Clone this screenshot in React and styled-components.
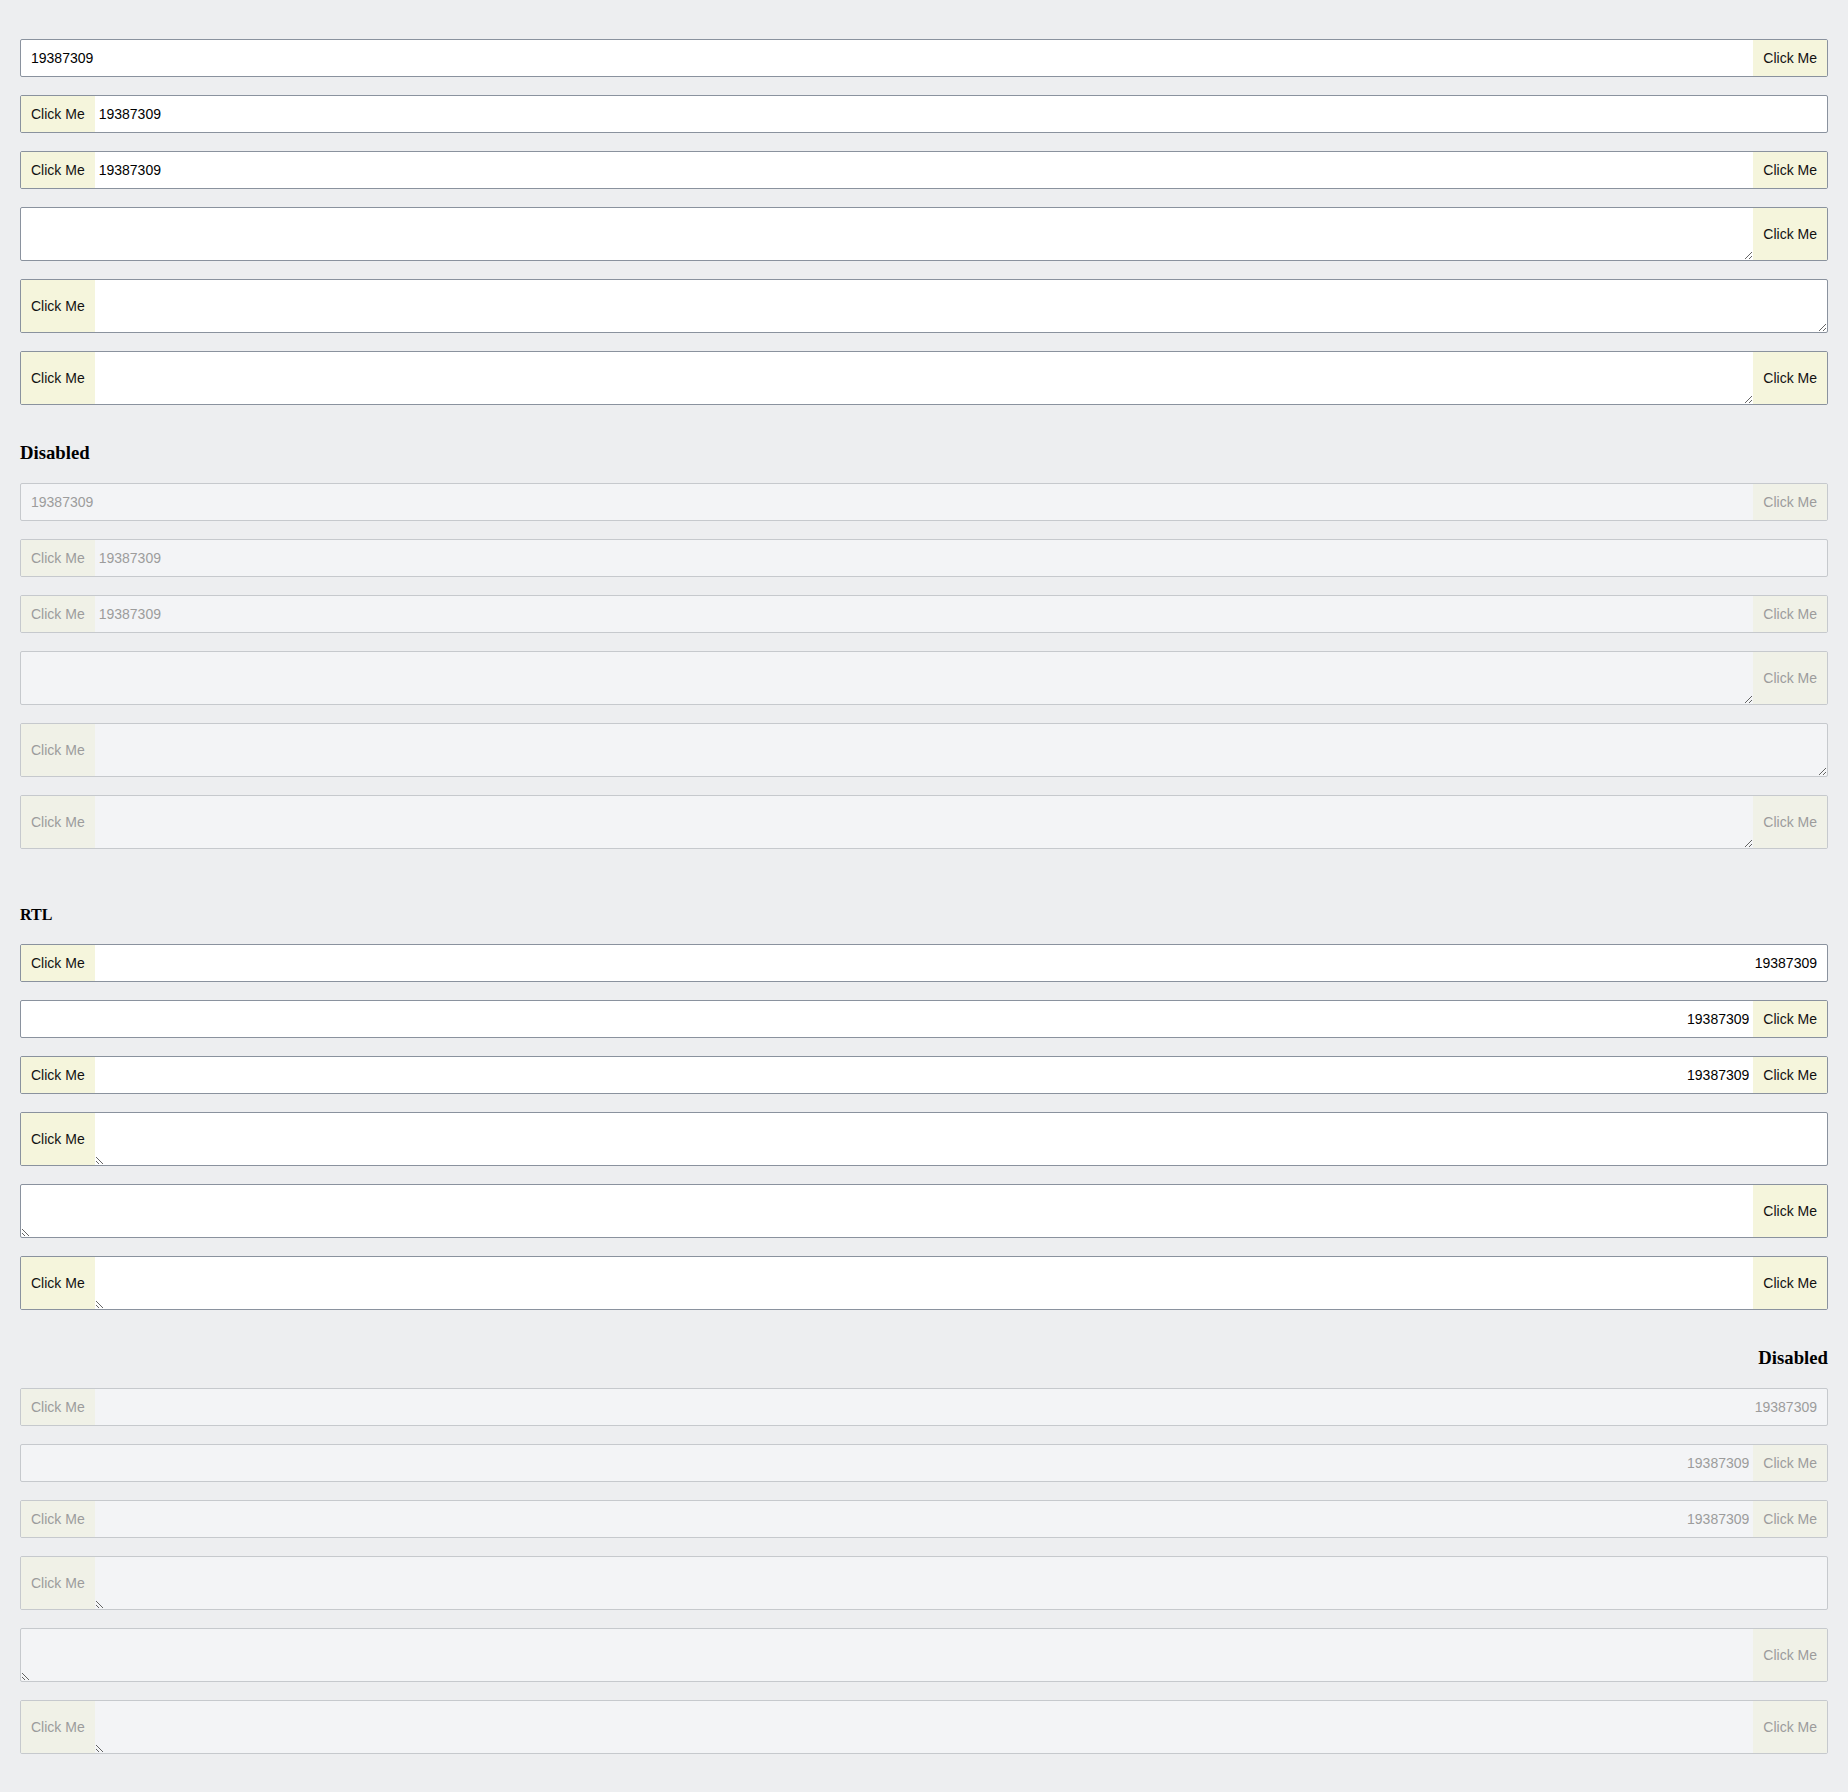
import styled, { createGlobalStyle } from 'styled-components';

const GlobalStyle = createGlobalStyle`
  html, body {
    margin: 0;
    padding: 0;
    background: #edeef0;
  }
  body {
    font-family: "Liberation Serif", "Times New Roman", serif;
  }
`;

const Page = styled.div`
  display: flex;
  flex-direction: column;
  padding: 39px 20px 19px;
`;

const Section = styled.div`
  display: flex;
  flex-direction: column;
  direction: ${props => (props.rtl ? 'rtl' : 'ltr')};
`;

const Title = styled.h3`
  font-family: "Liberation Serif", "Times New Roman", serif;
  font-size: 18.72px;
  font-weight: bold;
  color: #000;
  margin: 19px 0 19px;
`;

const SubTitle = styled.h4`
  font-family: "Liberation Serif", "Times New Roman", serif;
  font-size: 16px;
  font-weight: bold;
  color: #000;
  margin: 39px 0 20px;
`;

const Field = styled.div`
  display: flex;
  align-items: stretch;
  height: ${props => (props.multiline ? '54px' : '38px')};
  box-sizing: border-box;
  margin-bottom: 18px;
  border: 1px solid ${props => (props.disabled ? '#c6c9cd' : '#8a929e')};
  border-radius: 2px;
  overflow: hidden;
  background: ${props => (props.disabled ? '#f3f4f6' : '#fff')};
`;

const AddOn = styled.button`
  flex: none;
  display: flex;
  align-items: center;
  margin: 0;
  padding: 0 10px;
  border: none;
  border-radius: 0;
  background: ${props => (props.disabled ? '#f0f1e7' : '#f5f5dc')};
  color: ${props => (props.disabled ? '#9c9c9c' : '#111')};
  font-family: "Liberation Sans", Arial, sans-serif;
  font-size: 14px;
  cursor: pointer;

  &:disabled {
    cursor: default;
  }
`;

const TextInput = styled.input`
  flex: 1;
  min-width: 0;
  margin: 0;
  border: none;
  outline: none;
  background: transparent;
  padding-block: 0;
  padding-inline-start: ${props => (props.$before ? '4px' : '10px')};
  padding-inline-end: ${props => (props.$after ? '4px' : '10px')};
  font-family: "Liberation Sans", Arial, sans-serif;
  font-size: 14px;
  color: #000;

  &:disabled {
    color: #9c9c9c;
    -webkit-text-fill-color: #9c9c9c;
  }
`;

const TextArea = styled.textarea`
  flex: 1;
  min-width: 0;
  margin: 0;
  border: none;
  outline: none;
  background: transparent;
  resize: vertical;
  box-sizing: border-box;
  height: 100%;
  padding: 8px 10px;
  font-family: "Liberation Sans", Arial, sans-serif;
  font-size: 14px;
  color: #000;
`;

const rows = [
  { before: false, after: true },
  { before: true, after: false },
  { before: true, after: true },
  { before: false, after: true, multiline: true },
  { before: true, after: false, multiline: true },
  { before: true, after: true, multiline: true },
];

const VALUE = '19387309';

const InputRow = ({ before, after, multiline, disabled }) => (
  <Field multiline={multiline} disabled={disabled}>
    {before && <AddOn disabled={disabled}>Click Me</AddOn>}
    {multiline ? (
      <TextArea disabled={disabled} />
    ) : (
      <TextInput
        defaultValue={VALUE}
        disabled={disabled}
        $before={before}
        $after={after}
      />
    )}
    {after && <AddOn disabled={disabled}>Click Me</AddOn>}
  </Field>
);

const Group = ({ disabled }) =>
  rows.map((row, i) => <InputRow key={i} {...row} disabled={disabled} />);

const App = () => {
  return (
    <>
      <GlobalStyle />
      <Page>
        <Section>
          <Group />
          <Title>Disabled</Title>
          <Group disabled />
        </Section>
        <SubTitle>RTL</SubTitle>
        <Section rtl>
          <Group />
          <Title>Disabled</Title>
          <Group disabled />
        </Section>
      </Page>
    </>
  );
};

export default App;
